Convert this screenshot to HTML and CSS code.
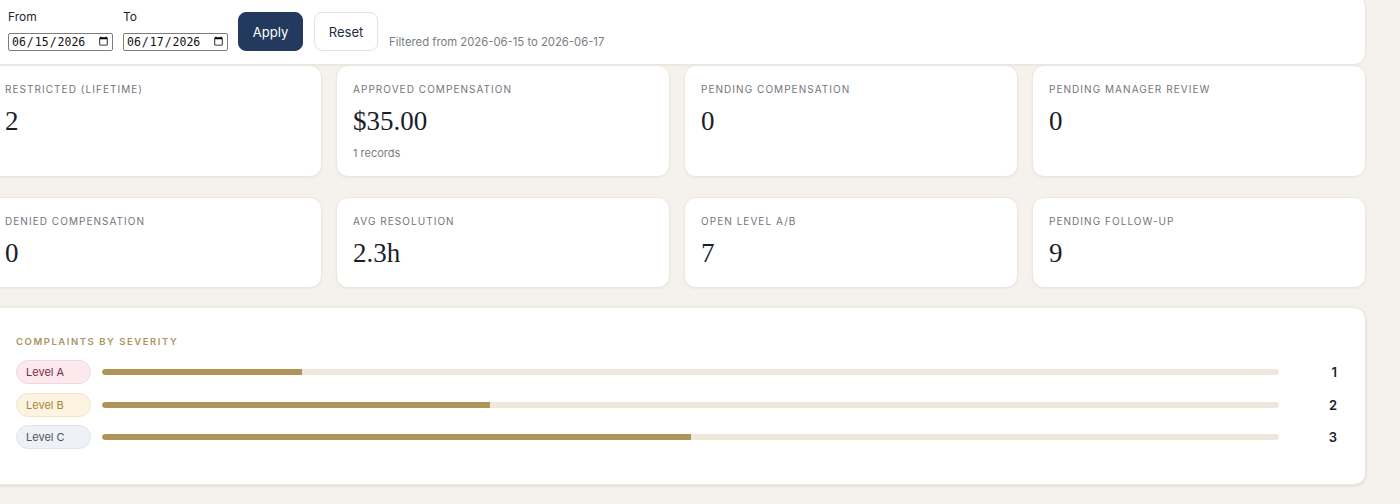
FILE: index.html
```html
<!DOCTYPE html>
<html lang="en">
<head>
<meta charset="utf-8">
<title>Complaints dashboard</title>
<link rel="stylesheet" href="styles.css">
</head>
<body>
<main class="board">
  <section class="card filter-card">
    <form class="filter-form">
      <label class="field">
        <span class="field-label">From</span>
        <input class="date-input" type="date" value="2026-06-15">
      </label>
      <label class="field">
        <span class="field-label">To</span>
        <input class="date-input" type="date" value="2026-06-17">
      </label>
      <button type="button" class="btn btn-primary">Apply</button>
      <button type="button" class="btn btn-ghost">Reset</button>
      <span class="filter-note">Filtered from 2026-06-15 to 2026-06-17</span>
    </form>
  </section>

  <section class="stats stats-top">
    <div class="card stat">
      <div class="stat-label">Restricted (lifetime)</div>
      <div class="stat-value">2</div>
    </div>
    <div class="card stat">
      <div class="stat-label">Approved compensation</div>
      <div class="stat-value">$35.00</div>
      <div class="stat-sub">1 records</div>
    </div>
    <div class="card stat">
      <div class="stat-label">Pending compensation</div>
      <div class="stat-value">0</div>
    </div>
    <div class="card stat">
      <div class="stat-label">Pending manager review</div>
      <div class="stat-value">0</div>
    </div>
  </section>

  <section class="stats">
    <div class="card stat">
      <div class="stat-label">Denied compensation</div>
      <div class="stat-value">0</div>
    </div>
    <div class="card stat">
      <div class="stat-label">Avg resolution</div>
      <div class="stat-value">2.3h</div>
    </div>
    <div class="card stat">
      <div class="stat-label">Open Level A/B</div>
      <div class="stat-value">7</div>
    </div>
    <div class="card stat">
      <div class="stat-label">Pending follow-up</div>
      <div class="stat-value">9</div>
    </div>
  </section>

  <section class="card severity">
    <h2 class="section-title">Complaints by severity</h2>
    <div class="sev-list">
      <div class="sev-row">
        <span class="pill pill-a">Level A</span>
        <div class="track"><div class="fill" style="width:17%"></div></div>
        <span class="count">1</span>
      </div>
      <div class="sev-row">
        <span class="pill pill-b">Level B</span>
        <div class="track"><div class="fill" style="width:33%"></div></div>
        <span class="count">2</span>
      </div>
      <div class="sev-row">
        <span class="pill pill-c">Level C</span>
        <div class="track"><div class="fill" style="width:50%"></div></div>
        <span class="count">3</span>
      </div>
    </div>
  </section>
</main>
</body>
</html>
```

FILE: styles.css
```css
* {
  box-sizing: border-box;
}

html,
body {
  margin: 0;
  height: 100%;
}

body {
  background: #f5f2ed;
  font-family: Inter, "Noto Sans", "Liberation Sans", sans-serif;
  color: #1f2330;
  overflow: hidden;
}

/* the board is scrolled slightly to the right */
.board {
  width: 1378px;
  margin-left: -12px;
  margin-top: -5px;
}

.card {
  background: #ffffff;
  border: 1px solid #ebe7df;
  border-radius: 12px;
  box-shadow: 0 1px 2px rgba(60, 50, 30, 0.05);
}

/* ---------- filter bar ---------- */
.filter-card {
  padding: 13px 18px 13px 19px;
}

.filter-form {
  display: flex;
  align-items: flex-end;
}

.field {
  display: flex;
  flex-direction: column;
  margin-right: 10px;
}

.field-label {
  font-size: 12px;
  line-height: 16px;
  color: #1f2330;
  margin-bottom: 8px;
}

.date-input {
  width: 105px;
  height: 18px;
  padding: 0 1px 0 2px;
  font-family: "DejaVu Sans Mono", "Liberation Mono", monospace;
  font-size: 11.5px;
  color: #111;
  background: #fff;
  border: 1px solid #7d7d7d;
  border-radius: 2px;
}

.btn {
  height: 39px;
  font-family: inherit;
  font-size: 13px;
  border-radius: 8px;
  cursor: pointer;
}

.btn-primary {
  width: 65px;
  padding: 0;
  background: #233a5e;
  border: 1px solid #233a5e;
  color: #ffffff;
  margin-right: 11px;
}

.btn-ghost {
  width: 64px;
  padding: 0;
  background: #ffffff;
  border: 1px solid #e7e3db;
  color: #1f2a44;
  margin-right: 11px;
}

.filter-note {
  font-size: 11.3px;
  line-height: 16px;
  color: #7b7b82;
  padding-bottom: 1px;
}

/* ---------- stat cards ---------- */
.stats {
  display: grid;
  grid-template-columns: repeat(4, 1fr);
  column-gap: 14px;
  margin-top: 20px;
}

.stats-top {
  margin-top: 0;
}

.stat {
  padding: 16px;
}

.stat-label {
  font-size: 10px;
  line-height: 14px;
  letter-spacing: 1.05px;
  text-transform: uppercase;
  color: #74747c;
}

.stat-value {
  margin-top: 9px;
  margin-bottom: 2px;
  font-family: "Liberation Serif", "DejaVu Serif", serif;
  font-size: 27px;
  line-height: 32px;
  color: #1b1d2b;
}

.stat-sub {
  margin-top: 9px;
  font-size: 11px;
  line-height: 14px;
  color: #7b7b82;
}

/* ---------- severity breakdown ---------- */
.severity {
  margin-top: 19px;
  padding: 28px 27px 35px 27px;
  box-shadow: 0 1px 3px rgba(60, 50, 30, 0.12);
}

.section-title {
  margin: 0 0 12px;
  font-size: 9.5px;
  line-height: 12px;
  font-weight: 600;
  letter-spacing: 1.55px;
  text-transform: uppercase;
  color: #ac9460;
}

.sev-list {
  display: flex;
  flex-direction: column;
  gap: 8.5px;
}

.sev-row {
  display: grid;
  grid-template-columns: 75px 1fr 48px;
  column-gap: 11px;
  align-items: center;
}

.pill {
  display: block;
  height: 24px;
  padding: 0 9px;
  font-size: 11px;
  line-height: 22px;
  border-radius: 12px;
  border: 1px solid transparent;
}

.pill-a {
  background: #fbe9ee;
  border-color: #f2d5dd;
  color: #7a2948;
}

.pill-b {
  background: #fcf3e0;
  border-color: #f3e5c3;
  color: #a8843e;
}

.pill-c {
  background: #eef2f7;
  border-color: #dfe5ee;
  color: #4b5163;
}

.track {
  height: 6px;
  border-radius: 3px;
  background: #eee8dc;
  overflow: hidden;
}

.fill {
  height: 100%;
  background: #b0955b;
  border-radius: 3px 0 0 3px;
}

.count {
  text-align: right;
  font-size: 13px;
  font-weight: 600;
  color: #1b1d2b;
  padding-right: 1px;
}
```
